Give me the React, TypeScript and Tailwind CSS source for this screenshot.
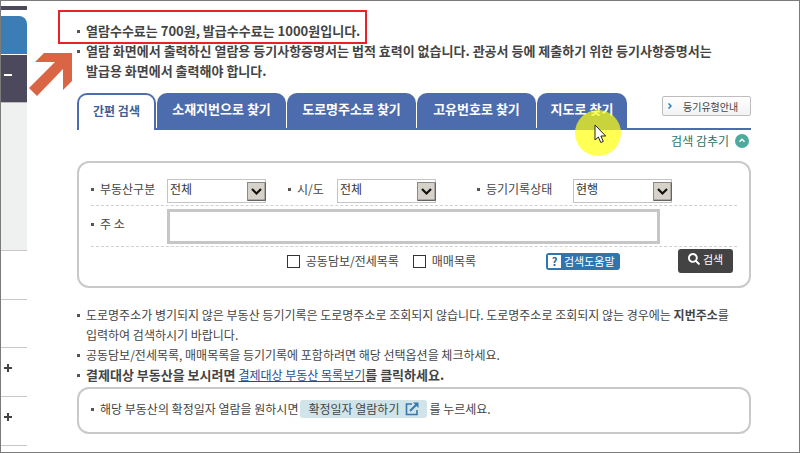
import React, { useState } from 'react';
import { FaSearch } from 'react-icons/fa';

const tabs = [
  { label: '소재지번으로 찾기', className: 'w-[129px]' },
  { label: '도로명주소로 찾기', className: 'w-[129px]' },
  { label: '고유번호로 찾기', className: 'w-[119px]' },
];

const tabStyle = 'h-[37px] shrink-0 rounded-t-[10px] bg-[#4c6cad] pb-[5px] text-[13px] font-bold text-white';

const Bullet = () => <span className="mt-[9px] mr-[6px] size-[3px] shrink-0 bg-[#555]" />;

const SelectBox = ({ id, value }: { id: string; value: string }) => (
  <div className="relative h-6 w-[99px] shrink-0">
    <select
      id={id}
      defaultValue={value}
      className="block h-full w-full appearance-none border border-[#c4c4c4] bg-white pr-5 pb-[5px] pl-[2px] text-[12px] leading-[18px] text-[#333]"
    >
      <option>{value}</option>
    </select>
    <svg className="pointer-events-none absolute top-[3px] right-0" width="19" height="19" viewBox="0 0 19 19">
      <rect x="0.5" y="0.5" width="18" height="18" fill="#d6d2ca" stroke="#8a8a86" />
      <path d="M1 18.2h17.2V1" fill="none" stroke="#55534e" />
      <path d="M5 7l4.5 4.5L14 7" fill="none" stroke="#111" strokeWidth="2.2" />
    </svg>
  </div>
);

const Sidebar = () => (
  <aside className="w-[26px] shrink-0">
    <div className="mt-[5px] h-1 bg-[#4d4a5e]" />
    <div className="mt-[6px] h-[38px] rounded-tr-lg bg-[#3d7db5]" />
    <div className="mt-px flex h-[48px] items-start border-b border-[#bbb] bg-[#4c495d] pt-[19px] pl-[3px]">
      <span className="h-[2px] w-2 bg-white" />
    </div>
    <div className="h-[148px] border-b border-[#c8c8c8] bg-[#eff1f0]" />
    <div className="h-[49px] border-b border-[#c8c8c8]" />
    <div className="h-12 border-b border-[#c8c8c8]" />
    {[0, 1].map((item) => (
      <div key={item} className="flex h-[49px] items-start border-b border-[#c8c8c8] pt-4 pl-[3px]">
        <svg width="8" height="8" viewBox="0 0 8 8">
          <path d="M4 0v8M0 4h8" stroke="#444" strokeWidth="2" />
        </svg>
      </div>
    ))}
  </aside>
);

const SearchForm = () => {
  const [collateral, setCollateral] = useState(false);
  const [trade, setTrade] = useState(false);

  return (
    <form
      className="mt-[10px] rounded-[12px] border-2 border-[#c9c9c9] px-3 pt-4 pb-[13px] text-[12px] leading-5"
      onSubmit={(e) => e.preventDefault()}
    >
      <div className="flex border-b border-dashed border-[#d0d0d0] pb-[2px]">
        <label htmlFor="kind" className="flex w-[76px] shrink-0"><Bullet />부동산구분</label>
        <SelectBox id="kind" value="전체" />
        <label htmlFor="city" className="ml-[22px] flex w-[49px] shrink-0"><Bullet />시/도</label>
        <SelectBox id="city" value="전체" />
        <label htmlFor="state" className="ml-[41px] flex w-24 shrink-0"><Bullet />등기기록상태</label>
        <SelectBox id="state" value="현행" />
      </div>
      <div className="flex border-b border-dashed border-[#d0d0d0] pt-[3px] pb-[2px]">
        <label htmlFor="address" className="mt-[5px] flex w-[76px] shrink-0"><Bullet />주 소</label>
        <input id="address" type="text" className="mr-[77px] h-[35px] min-w-0 flex-1 border-3 border-[#c6c6c6] px-2" />
      </div>
      <div className="flex items-center pt-[2px] pr-1">
        <label className="ml-auto flex items-center gap-[6px]">
          <input
            type="checkbox"
            checked={collateral}
            onChange={() => setCollateral(!collateral)}
            className="size-[13px] appearance-none border border-[#333] checked:bg-[#333]"
          />
          공동담보/전세목록
        </label>
        <label className="ml-[14px] flex items-center gap-[6px]">
          <input
            type="checkbox"
            checked={trade}
            onChange={() => setTrade(!trade)}
            className="size-[13px] appearance-none border border-[#333] checked:bg-[#333]"
          />
          매매목록
        </label>
        <button type="button" className="ml-[70px] flex h-[17px] w-[74px] items-center gap-[3px] rounded-[3px] bg-[#2f76ae] pl-[2px] text-[11px] text-white">
          <span className="flex h-[13px] w-[13px] items-center justify-center bg-white font-bold text-[#2f5f8c]">?</span>
          검색도움말
        </button>
        <button type="submit" className="ml-[58px] flex h-6 w-[55px] items-center justify-center gap-[3px] rounded-[3px] bg-[#434343] pb-1 text-[11px] text-white">
          <FaSearch size={12} />
          검색
        </button>
      </div>
    </form>
  );
};

export default function App() {
  return (
    <div className="flex min-h-screen border border-[#7b7b7b] bg-white font-['Noto_Sans_CJK_KR','Liberation_Sans',sans-serif] text-[#444]">
      <Sidebar />

      <main className="relative min-w-0 flex-1 pt-5 pr-12 pl-[50px]">
        {/* Arrow pointing at the fee notice */}
        <svg className="absolute top-[51px] left-[1px]" width="45" height="45" viewBox="0 0 45 45">
          <path d="M16 1H44V29L35 38V17L9 44L1 36L27 10H7Z" fill="#d96544" />
        </svg>

        <ul className="pr-4 text-[13px] leading-5 font-bold break-keep">
          <li className="relative flex">
            <Bullet />열람수수료는 700원, 발급수수료는 1000원입니다.
            <span className="absolute -top-[11px] -left-[19px] h-[34px] w-[309px] border-2 border-[#e8212b]" />
          </li>
          <li className="flex">
            <Bullet />
            <span>
              열람 화면에서 출력하신 열람용 등기사항증명서는 법적 효력이 없습니다. 관공서 등에 제출하기 위한 등기사항증명서는 발급용 화면에서 출력해야 합니다.
            </span>
          </li>
        </ul>

        <div className="mt-3 flex items-end border-b-2 border-[#4c6cad]">
          <nav className="-mb-[2px] flex gap-px">
            <button className="h-[37px] w-[79px] shrink-0 rounded-t-[10px] border-2 border-b-0 border-[#4c6cad] bg-white pb-1 text-[12px] font-bold text-[#3f5f96]">
              간편 검색
            </button>
            {tabs.map((tab) => (
              <button key={tab.label} className={`${tabStyle} ${tab.className}`}>{tab.label}</button>
            ))}
            <button className={`${tabStyle} relative w-[90px]`}>
              지도로 찾기
              {/* Pointer with its highlight */}
              <span className="absolute top-[17px] left-[38px] size-[46px] rounded-full bg-[#ffff0a]/70" />
              <svg className="absolute top-[31px] left-[57px]" width="13" height="20" viewBox="0 0 13 20">
                <path d="M1 1V16L4.3 13L6.8 18.5L9.3 17.4L6.9 12H11.7Z" fill="#fff" stroke="#222" />
              </svg>
            </button>
          </nav>
          <button className="mb-3 ml-auto flex h-5 w-[89px] items-center rounded-[2px] border border-[#bdbdbd] bg-gradient-to-b from-white to-[#f1f2f4] pl-[5px] text-[10px]">
            <svg className="mr-[11px]" width="4" height="6" viewBox="0 0 4 6">
              <path d="M0.5 0.5L3 3L0.5 5.5" fill="none" stroke="#2f7fae" strokeWidth="1.5" />
            </svg>
            등기유형안내
          </button>
        </div>

        <div className="mt-[1px] flex justify-end pr-[2px]">
          <button className="flex h-5 items-center gap-[6px] text-[12px] text-[#2b7265]">
            검색 감추기
            <svg width="14" height="14" viewBox="0 0 14 14">
              <circle cx="7" cy="7" r="7" fill="#4dab9d" />
              <path d="M4.5 7.8L7 5.3L9.5 7.8" fill="none" stroke="#fff" strokeWidth="1.5" />
            </svg>
          </button>
        </div>

        <SearchForm />

        <ul className="mt-[17px] text-[12px] leading-5 break-keep">
          <li className="flex">
            <Bullet />
            <span>
              도로명주소가 병기되지 않은 부동산 등기기록은 도로명주소로 조회되지 않습니다. 도로명주소로 조회되지 않는 경우에는 <b>지번주소</b>를
              <br />
              입력하여 검색하시기 바랍니다.
            </span>
          </li>
          <li className="flex"><Bullet />공동담보/전세목록, 매매목록을 등기기록에 포함하려면 해당 선택옵션을 체크하세요.</li>
          <li className="flex text-[13px] font-bold">
            <Bullet />
            <span>
              결제대상 부동산을 보시려면{' '}
              <a href="#list" className="text-[12px] font-normal text-[#1f4f94] underline">결제대상 부동산 목록보기</a>
              를 클릭하세요.
            </span>
          </li>
        </ul>

        <div className="mt-[2px] flex h-[47px] items-center rounded-[12px] border-2 border-[#c9c9c9] px-3 pb-1 text-[12px] leading-5">
          <span className="flex"><Bullet />해당 부동산의 확정일자 열람을 원하시면</span>
          <button className="mx-[2px] flex h-[18px] items-center gap-[6px] rounded-[3px] bg-[#d0e4ea] px-2">
            확정일자 열람하기
            <svg width="14" height="14" viewBox="0 0 14 14">
              <path d="M7 2H1.5V12.5H12V8" fill="none" stroke="#3578ae" strokeWidth="1.6" />
              <path d="M5 9L11 3" fill="none" stroke="#3578ae" strokeWidth="2" />
              <path d="M8 0.5H13.5V6Z" fill="#3578ae" />
            </svg>
          </button>
          를 누르세요.
        </div>
      </main>
    </div>
  );
}
